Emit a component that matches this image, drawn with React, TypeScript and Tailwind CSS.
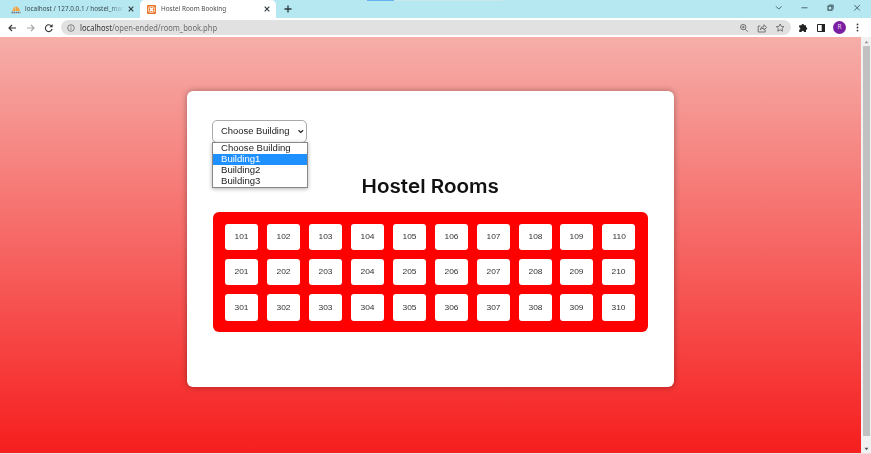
import React from "react";

const floors = [1, 2, 3];
const numbers = Array.from({ length: 10 }, (_, i) => i + 1);
const buildings = ["Choose Building", "Building1", "Building2", "Building3"];

function Cross({ className = "" }: { className?: string }) {
  return (
    <svg className={className} width="6" height="6" viewBox="0 0 6 6" fill="none" stroke="#333f43" strokeWidth="1.2">
      <path d="M.7.7 5.3 5.3M5.3.7.7 5.3" />
    </svg>
  );
}

function Tabs() {
  return (
    <div className="relative flex h-[18px] bg-[#b6e8f2] font-['Noto_Sans','Open_Sans',sans-serif] text-[7px] leading-[18px]">
      <div className="flex h-full w-[140px] items-center pl-[11px]">
        <svg className="mr-[4px] shrink-0" width="10" height="9" viewBox="0 0 10 9">
          <path d="M1 6 4 1v5zM4.5 6V1.3Q8 2 9 6z" fill="#f4a340" />
          <path d="M.5 7.5h9" stroke="#747179" strokeWidth="1.4" strokeDasharray="1.5 .5" />
        </svg>
        <div className="w-[99px] shrink-0 whitespace-nowrap text-[#36484e] [mask-image:linear-gradient(to_right,black_85%,transparent)]">
          <span className="inline-block origin-left scale-x-[0.91]">localhost / 127.0.0.1 / hostel_mar</span>
        </div>
        <Cross className="ml-[4px] shrink-0" />
      </div>
      <div className="flex h-full w-[136px] items-center rounded-t-[5px] bg-white pl-[7px]">
        <svg className="mr-[5px] shrink-0" width="9" height="9" viewBox="0 0 9 9">
          <rect width="9" height="9" rx="1" fill="#e97224" />
          <path d="M2.9 2.7 6.1 6.3M6.1 2.7 2.9 6.3" stroke="white" strokeWidth="1.5" />
          <rect x="1.4" y="1.7" width="6.2" height="5.6" rx="1.5" fill="none" stroke="white" strokeWidth=".7" />
        </svg>
        <div className="w-[103px] whitespace-nowrap text-[#4b4b4b]">
          <span className="inline-block origin-left scale-x-[0.915]">Hostel Room Booking</span>
        </div>
        <Cross />
      </div>
      <svg className="ml-[8px] mt-[5px]" width="8" height="8" viewBox="0 0 8 8" stroke="#26383e" strokeWidth="1.3">
        <path d="M4 .5v7M.5 4h7" />
      </svg>
      <div className="absolute left-[367px] top-0 h-px w-[27px] bg-[#61b4f0]" />
      <div className="absolute left-[394px] top-0 h-px w-[109px] bg-[#cce7eb]" />
      <svg className="ml-auto mr-[10px] mt-[3px]" width="86" height="10" viewBox="0 0 86 10" fill="none" stroke="#405a61" strokeWidth=".9">
        <path d="m1 3.3 2.8 2.8 2.8-2.8" />
        <path d="M26.5 4.8h6" />
        <path d="M53 3.2h4v4h-4z" strokeWidth="1.2" />
        <path d="M54 2h4.2v4.2" />
        <path d="m79.3 2 5.5 5.5m0-5.5-5.5 5.5" />
      </svg>
    </div>
  );
}

function AddressBar() {
  return (
    <div className="flex h-[19px] items-center bg-white font-['Noto_Sans','Open_Sans',sans-serif]">
      <svg className="ml-[8px] shrink-0" width="46" height="10" viewBox="0 0 46 10" fill="none" strokeWidth="1.1">
        <path d="M8 5H1.2M4 2 1 5l3 3" stroke="#333" />
        <path d="M19 5h6.8M23 2l3 3-3 3" stroke="#a5a5a5" />
        <path d="M43.5 3.1A3.4 3.4 0 1 0 44.1 6" stroke="#333" />
        <path d="M44.6 1v3.2h-3.2z" fill="#333" />
      </svg>
      <div className="ml-[7px] flex h-[15px] w-[730px] items-center rounded-full bg-[#e1e1e1] pl-[6px] pr-[6px]">
        <svg className="mr-[5px] shrink-0" width="8" height="8" viewBox="0 0 8 8" fill="none" stroke="#666" strokeWidth=".8">
          <circle cx="4" cy="4" r="3.3" />
          <path d="M4 3.6v2.1M4 2v.8" />
        </svg>
        <span className="origin-left scale-x-[0.945] whitespace-nowrap text-[8px] leading-[14px] text-[#6c6c6c]">
          <span className="text-[#333]">localhost</span>/open-ended/room_book.php
        </span>
        <svg className="ml-auto shrink-0" width="46" height="10" viewBox="0 0 46 10" fill="none" stroke="#616161" strokeWidth=".85">
          <circle cx="4.2" cy="4.1" r="2.7" />
          <path d="m6.2 6.1 2.6 2.6M2.8 4.1h2.8M4.2 2.7v2.8" />
          <path d="M21.3 3h-2.1v6h7V6.7" />
          <path d="M21.2 6.8q.4-3.3 3.7-3.3V1.7l2.8 2.7-2.8 2.5V5.2q-2.4 0-3.7 1.6z" />
          <path d="m41.2 1 1.1 2.4 2.6.3-1.9 1.8.5 2.7-2.3-1.3-2.4 1.3.5-2.7-1.9-1.8 2.6-.3z" />
        </svg>
      </div>
      <svg className="ml-[7px] shrink-0" width="32" height="10" viewBox="0 0 32 10" fill="#222">
        <path d="M1.2 2.2h2.3a1.25 1.25 0 0 1 2.5 0h2v2.1a1.25 1.25 0 0 1 0 2.5V9H5.9a1.15 1.15 0 0 0-2.3 0H1.2V6.7a1.15 1.15 0 0 0 0-2.3z" />
        <path d="M19.5 1.5h7v7h-7z" fill="none" stroke="#222" />
        <path d="M23.7 1h3.3v8h-3.3z" />
      </svg>
      <div className="ml-[3px] flex size-[13px] shrink-0 items-center justify-center rounded-full bg-[#7b1fa2] text-[6.5px] leading-none text-[#e8d4ef]">R</div>
      <svg className="ml-[10px]" width="3" height="9" viewBox="0 0 3 9" fill="#333">
        <circle cx="1.5" cy="1.4" r=".9" /><circle cx="1.5" cy="4.5" r=".9" /><circle cx="1.5" cy="7.6" r=".9" />
      </svg>
    </div>
  );
}

function BuildingSelect() {
  return (
    <div className="relative h-[23px] w-[95px] font-['Liberation_Sans',Arial,sans-serif] text-[8.5px] text-[#222]">
      <div className="flex h-[23px] items-center rounded-[5px] border border-[#aaa] bg-white pl-[8px] pr-[2px]">
        <span className="origin-left scale-x-[1.105] whitespace-nowrap">Choose Building</span>
        <svg className="ml-auto" width="7" height="5" viewBox="0 0 7 5" fill="none" stroke="#222" strokeWidth="1.2">
          <path d="m1.5 1.2 2.3 2.2 2.3-2.2" />
        </svg>
      </div>
      <div className="absolute left-0 top-[22.5px] w-[96px] border border-[#888] bg-white shadow-[0_1px_4px_rgba(0,0,0,0.3)]">
        {buildings.map((name) => (
          <div key={name} className={name === "Building1" ? "h-[11px] bg-[#1e90ff] pl-[8.5px] leading-[11px] text-white" : "h-[11px] pl-[8.5px] leading-[11px]"}>
            <span className="inline-block origin-left scale-x-[1.125] whitespace-nowrap">{name}</span>
          </div>
        ))}
      </div>
    </div>
  );
}

export default function App() {
  return (
    <div className="flex h-[454px] w-[871px] flex-col overflow-hidden bg-[#f5dada]">
      <Tabs />
      <AddressBar />
      <div className="flex h-[416px]">
        <main className="w-[861px] bg-linear-to-b/srgb from-[#f6aea9] to-[#f61e1e] pl-[187px] pt-[54px]">
          <section className="h-[296px] w-[486.5px] rounded-[6px] bg-white pl-[25.5px] pt-[28.5px] shadow-[0_0_6px_rgba(0,0,0,0.35)]">
            <div className="-ml-[0.6px]">
              <BuildingSelect />
            </div>
            <h1 className="mt-[29px] h-[30px] w-[435px] text-center font-['Inter',sans-serif] text-[19px] font-semibold leading-[30px] text-[#111]">
              <span className="inline-block scale-x-[1.085]">Hostel Rooms</span>
            </h1>
            <div className="mt-[10px] grid h-[120px] w-[435px] grid-cols-[repeat(10,33px)] grid-rows-[repeat(3,26.5px)] content-start gap-x-[8.93px] gap-y-[8.8px] rounded-[6px] bg-[#fe0000] pl-[12.6px] pt-[12px]">
              {floors.map((floor) =>
                numbers.map((number) => (
                  <button key={`${floor}-${number}`} className="flex items-center justify-center rounded-[3px] bg-white pt-[0.5px] font-['Liberation_Sans',Arial,sans-serif] text-[7.8px] leading-none text-[#333]">
                    <span className="scale-x-[1.08]">{floor * 100 + number}</span>
                  </button>
                )),
              )}
            </div>
          </section>
        </main>
        <div className="flex w-[10px] flex-col items-center bg-[#f1f1f1]">
          <svg className="mt-[3px]" width="5" height="4" viewBox="0 0 5 4"><path d="m2.5.8 2 2.4h-4z" fill="#999" /></svg>
          <div className="mt-[2px] h-[390px] w-[7px] bg-[#c1c1c1]" />
          <svg className="mt-[11px]" width="5" height="4" viewBox="0 0 5 4"><path d="m2.5 3.2 2-2.4h-4z" fill="#555" /></svg>
        </div>
      </div>
    </div>
  );
}
